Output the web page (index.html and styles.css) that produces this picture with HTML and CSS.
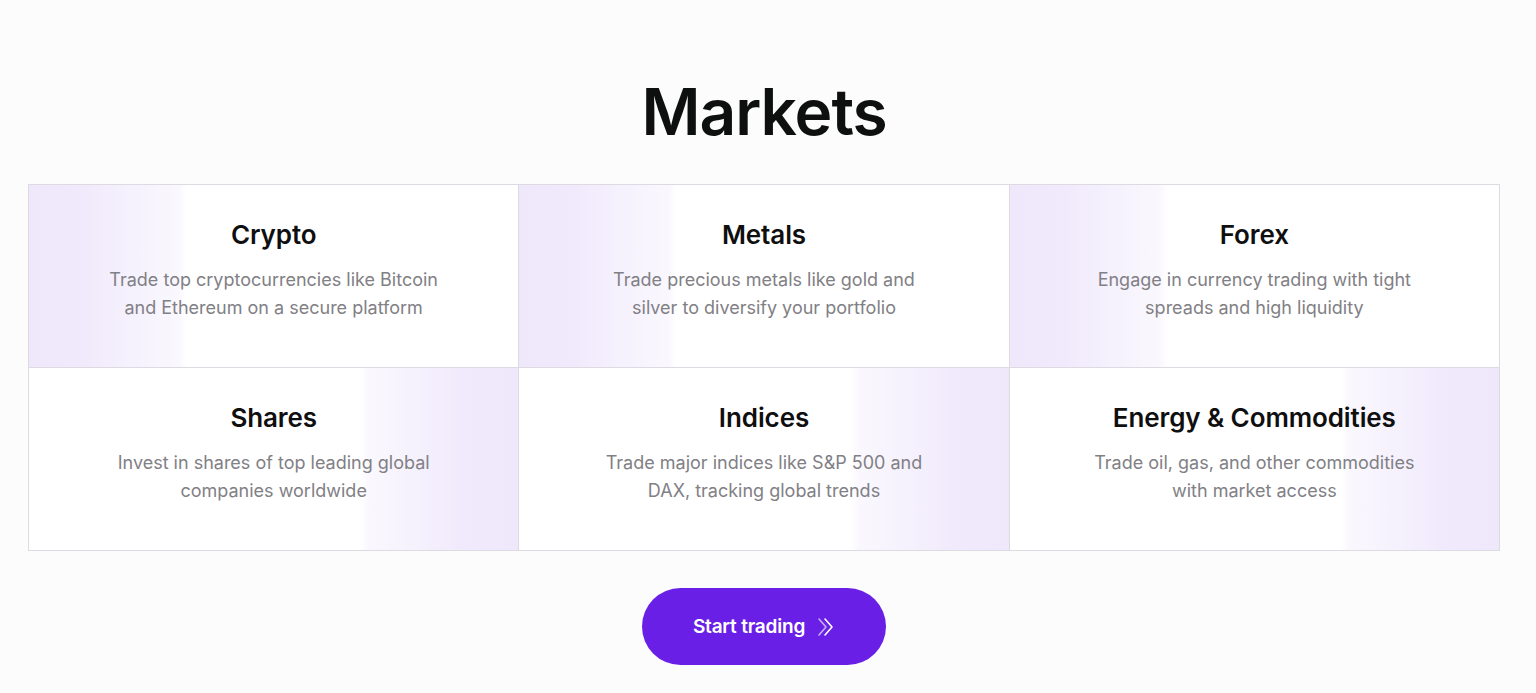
FILE: index.html
```html
<!DOCTYPE html>
<html lang="en">
<head>
<meta charset="utf-8">
<title>Markets</title>
<link rel="stylesheet" href="styles.css">
</head>
<body>
<section class="markets">
  <h1 class="markets-title">Markets</h1>
  <div class="grid">
    <div class="cell cell-top">
      <h2 class="cell-title">Crypto</h2>
      <p class="cell-text">Trade top cryptocurrencies like Bitcoin<br>and Ethereum on a secure platform</p>
    </div>
    <div class="cell cell-top">
      <h2 class="cell-title">Metals</h2>
      <p class="cell-text">Trade precious metals like gold and<br>silver to diversify your portfolio</p>
    </div>
    <div class="cell cell-top">
      <h2 class="cell-title">Forex</h2>
      <p class="cell-text">Engage in currency trading with tight<br>spreads and high liquidity</p>
    </div>
    <div class="cell cell-bottom">
      <h2 class="cell-title">Shares</h2>
      <p class="cell-text">Invest in shares of top leading global<br>companies worldwide</p>
    </div>
    <div class="cell cell-bottom">
      <h2 class="cell-title">Indices</h2>
      <p class="cell-text">Trade major indices like S&amp;P 500 and<br>DAX, tracking global trends</p>
    </div>
    <div class="cell cell-bottom">
      <h2 class="cell-title">Energy &amp; Commodities</h2>
      <p class="cell-text">Trade oil, gas, and other commodities<br>with market access</p>
    </div>
  </div>
  <div class="cta-row">
    <a class="cta" href="#">
      <span>Start trading</span>
      <svg class="cta-icon" width="18" height="20" viewBox="0 0 18 20" fill="none">
        <polyline points="2,2 9,10 2,18" stroke="#c7aef8" stroke-width="1.6" stroke-linecap="round" stroke-linejoin="round"/>
        <polyline points="8,2 15,10 8,18" stroke="#ffffff" stroke-width="1.6" stroke-linecap="round" stroke-linejoin="round"/>
      </svg>
    </a>
  </div>
</section>
</body>
</html>
```

FILE: styles.css
```css
* { box-sizing: border-box; }

html, body {
  margin: 0;
  padding: 0;
  background: #fdfcfd;
  font-family: "Inter", "Liberation Sans", sans-serif;
}

.markets {
  padding: 75px 36px 0 28px;
}

.markets-title {
  margin: 0 0 35px;
  text-align: center;
  font-size: 64px;
  line-height: 74px;
  font-weight: 600;
  letter-spacing: -1px;
  color: #0e0f0f;
}

.grid {
  display: grid;
  grid-template-columns: repeat(3, 1fr);
  border-top: 1px solid #dcdbe1;
  border-left: 1px solid #dcdbe1;
}

.cell {
  height: 183px;
  padding-top: 33px;
  text-align: center;
  border-right: 1px solid #dcdbe1;
  border-bottom: 1px solid #dcdbe1;
  background-color: #fff;
}

.cell-top {
  background-image: linear-gradient(90deg, #efe8fb 0, #f1eafc 58px, #f5f1fd 100px, #faf8fe 150px, #ffffff 158px);
}

.cell-bottom {
  background-image: linear-gradient(270deg, #efe8fb 0, #f1eafc 58px, #f5f1fd 100px, #faf8fe 150px, #ffffff 158px);
}

.cell-title {
  margin: 0;
  font-size: 26px;
  line-height: 34px;
  font-weight: 600;
  letter-spacing: -0.1px;
  color: #0f0f10;
}

.cell-text {
  margin: 14px 0 0;
  font-size: 18px;
  line-height: 28px;
  font-weight: 400;
  letter-spacing: 0;
  color: #818085;
}

.cta-row {
  display: flex;
  justify-content: center;
  margin-top: 37px;
}

.cta {
  display: flex;
  align-items: center;
  justify-content: center;
  gap: 12px;
  width: 244px;
  height: 77px;
  border-radius: 40px;
  background: #6a1fe6;
  color: #fff;
  text-decoration: none;
  font-size: 19px;
  font-weight: 600;
  letter-spacing: -0.2px;
}

.cta-icon {
  display: block;
}
```
